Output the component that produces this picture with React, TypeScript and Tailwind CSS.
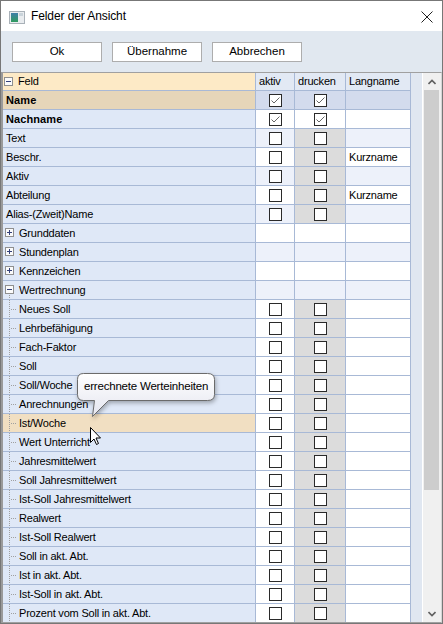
import React from 'react';

type Row = {
  label: string;
  kind: 'top' | 'group' | 'child';
  bold?: boolean;
  checks?: [boolean, boolean];
  lang?: string;
  open?: boolean;
};

const off: [boolean, boolean] = [false, false];

const rows: Row[] = [
  { label: 'Name', kind: 'top', bold: true, checks: [true, true] },
  { label: 'Nachname', kind: 'top', bold: true, checks: [true, true] },
  { label: 'Text', kind: 'top', checks: off },
  { label: 'Beschr.', kind: 'top', checks: off, lang: 'Kurzname' },
  { label: 'Aktiv', kind: 'top', checks: off },
  { label: 'Abteilung', kind: 'top', checks: off, lang: 'Kurzname' },
  { label: 'Alias-(Zweit)Name', kind: 'top', checks: off },
  { label: 'Grunddaten', kind: 'group' },
  { label: 'Stundenplan', kind: 'group' },
  { label: 'Kennzeichen', kind: 'group' },
  { label: 'Wertrechnung', kind: 'group', open: true },
  ...[
    'Neues Soll',
    'Lehrbefähigung',
    'Fach-Faktor',
    'Soll',
    'Soll/Woche',
    'Anrechnungen',
    'Ist/Woche',
    'Wert Unterricht',
    'Jahresmittelwert',
    'Soll Jahresmittelwert',
    'Ist-Soll Jahresmittelwert',
    'Realwert',
    'Ist-Soll Realwert',
    'Soll in akt. Abt.',
    'Ist in akt. Abt.',
    'Ist-Soll in akt. Abt.',
    'Prozent vom Soll in akt. Abt.',
  ].map((label): Row => ({ label, kind: 'child', checks: off })),
];

// plus / minus box of the tree, with optional line down to the children
const Expander = ({ open, x = 2, stem = false }: { open: boolean; x?: number; stem?: boolean }) => (
  <svg width="16" height="18" className="shrink-0">
    {stem && <line x1="6.5" y1="14" x2="6.5" y2="18" stroke="#a0a0a0" strokeDasharray="1 1" />}
    <rect x={x + 0.5} y="4.5" width="8" height="8" fill="#fbfbfb" stroke="#8f8f8f" />
    <line x1={x + 2} y1="8.5" x2={x + 7} y2="8.5" stroke="#33407a" />
    {!open && <line x1={x + 4.5} y1="6" x2={x + 4.5} y2="11" stroke="#33407a" />}
  </svg>
);

const TreeLine = () => (
  <svg width="16" height="18" className="shrink-0">
    <line x1="6.5" y1="0" x2="6.5" y2="18" stroke="#a0a0a0" strokeDasharray="1 1" />
    <line x1="8" y1="9.5" x2="13" y2="9.5" stroke="#a0a0a0" strokeDasharray="1 1" />
  </svg>
);

const CheckBox = ({ checked }: { checked: boolean }) => (
  <div className="w-[13px] h-[13px] border border-[#2a2a2a] bg-white flex items-center justify-center">
    {checked && (
      <svg width="11" height="11">
        <path d="M1.5 5.5 L4 8 L9.5 2.5" fill="none" stroke="#666666" strokeWidth="1" />
      </svg>
    )}
  </div>
);

const line = 'border-[#a8b9d6]';

function GridRow({ row, i }: { row: Row; i: number }) {
  const selected = i === 0;
  const hot = row.label === 'Ist/Woche';
  const feldBg = selected ? 'bg-[#e6d6b9]' : hot ? 'bg-[#f1dfc2]' : 'bg-[#dfe8f7]';
  const alt = row.kind !== 'child' && i % 2 === 0;
  const cellBg = selected ? 'bg-[#d3dbed]' : alt ? 'bg-[#edf1fa]' : 'bg-white';
  const druckBg = selected ? 'bg-[#d3dbed]' : row.checks && i > 1 ? 'bg-[#dcdcdc]' : cellBg;

  return (
    <div className="flex h-[19px] shrink-0">
      <div className={`w-[253px] flex items-center border-r border-b ${line} ${feldBg}`}>
        {row.kind === 'top' && (
          <span className={`pl-[3px] ${row.bold ? 'font-bold tracking-[0.1px]' : ''}`}>{row.label}</span>
        )}
        {row.kind === 'group' && (
          <>
            <Expander open={!!row.open} stem={row.open} />
            <span>{row.label}</span>
          </>
        )}
        {row.kind === 'child' && (
          <>
            <TreeLine />
            <span>{row.label}</span>
          </>
        )}
      </div>
      <div className={`w-[39px] flex items-center justify-center border-r border-b ${line} ${cellBg}`}>
        {row.checks && <CheckBox checked={row.checks[0]} />}
      </div>
      <div className={`w-[51px] flex items-center justify-center border-r border-b ${line} ${druckBg}`}>
        {row.checks && <CheckBox checked={row.checks[1]} />}
      </div>
      <div className={`w-[65px] flex items-center pl-[3px] border-r border-b ${line} ${cellBg}`}>
        {row.lang}
      </div>
    </div>
  );
}

const Button = ({ children }: { children: React.ReactNode }) => (
  <button className="w-[90px] h-[20px] bg-white border border-[#adadad] text-[11.5px] leading-none text-black">
    {children}
  </button>
);

export default function App() {
  return (
    <div className="relative w-[443px] h-[624px] border border-[#777777] bg-white flex flex-col overflow-hidden font-['Liberation_Sans',Arial,sans-serif] text-black">
      {/* title bar */}
      <div className="h-[30px] shrink-0 flex items-center bg-white pl-[8px] pr-[9px]">
        <svg width="16" height="13" className="mt-[2px]">
          <defs>
            <linearGradient id="ic" x1="0" y1="0" x2="0" y2="1">
              <stop offset="0" stopColor="#3f7ea8" />
              <stop offset="1" stopColor="#2f9b5e" />
            </linearGradient>
          </defs>
          <rect x="0.5" y="0.5" width="15" height="12" fill="#e9ecef" stroke="#a9b1b8" />
          <rect x="2" y="2" width="7" height="9" fill="url(#ic)" />
          <rect x="10" y="2" width="4" height="3" fill="#c9d3da" />
        </svg>
        <span className="ml-[6px] text-[12px] tracking-[-0.1px]">Felder der Ansicht</span>
        <svg width="12" height="12" className="ml-auto mt-[2px]">
          <path d="M0.5 0.5 L11.5 11.5 M11.5 0.5 L0.5 11.5" stroke="#222222" strokeWidth="1" />
        </svg>
      </div>

      {/* toolbar */}
      <div className="h-[41px] shrink-0 bg-[#e1e8f0] flex items-start gap-[10px] pl-[11px] pt-[11px]">
        <Button>Ok</Button>
        <Button>Übernahme</Button>
        <Button>Abbrechen</Button>
      </div>

      {/* grid */}
      <div className="flex-1 min-h-0 flex bg-[#e1e8f0] border-t border-l-2 border-r border-b border-t-[#a0a0a0] border-l-[#9a9a9a] border-r-[#d6d6d6] border-b-[#a0a0a0] text-[11px] tracking-[-0.2px]">
        <div className="w-[408px] flex flex-col overflow-hidden">
          <div className="flex h-[18px] shrink-0">
            <div className={`w-[253px] flex items-center border-r border-b ${line} bg-[#fdeac6]`}>
              <Expander open x={1} />
              <span className="-ml-[1px]">Feld</span>
            </div>
            <div className={`w-[39px] flex items-center pl-[3px] border-r border-b ${line} bg-[#e2e9f4]`}>aktiv</div>
            <div className={`w-[51px] flex items-center pl-[3px] border-r border-b ${line} bg-[#e2e9f4]`}>drucken</div>
            <div className={`w-[65px] flex items-center pl-[3px] border-r border-b ${line} bg-[#e2e9f4]`}>Langname</div>
          </div>
          {rows.map((row, i) => (
            <GridRow key={row.label} row={row} i={i} />
          ))}
        </div>
        <div className="w-[11px] bg-[#e0e7f1]" />
        <div className="w-[1px] bg-white" />
        {/* scrollbar */}
        <div className="w-[18px] bg-[#f0f0f0] flex flex-col">
          <div className="h-[17px] flex items-center justify-center">
            <svg width="8" height="6">
              <path d="M0.5 5 L4 1.5 L7.5 5" fill="none" stroke="#606060" strokeWidth="1.6" />
            </svg>
          </div>
          <div className="ml-[1px] w-[15px] h-[400px] bg-[#cdcdcd]" />
          <div className="flex-1" />
          <div className="h-[17px] flex items-center justify-center">
            <svg width="8" height="6">
              <path d="M0.5 1 L4 4.5 L7.5 1" fill="none" stroke="#606060" strokeWidth="1.6" />
            </svg>
          </div>
        </div>
      </div>

      {/* balloon tooltip */}
      <svg width="150" height="52" className="absolute left-[70px] top-[368px] drop-shadow-[1px_2px_2px_rgba(0,0,0,0.3)]">
        <defs>
          <linearGradient id="tip" x1="0" y1="0" x2="0" y2="1">
            <stop offset="0" stopColor="#ffffff" />
            <stop offset="1" stopColor="#e4e5ef" />
          </linearGradient>
        </defs>
        <path
          d="M12.5 4.5 H136.5 Q143.5 4.5 143.5 10.5 V25.5 Q143.5 31.5 136.5 31.5 H37.5 L21.5 47.5 L23.5 31.5 H12.5 Q6.5 31.5 6.5 25.5 V10.5 Q6.5 4.5 12.5 4.5 Z"
          fill="url(#tip)"
          stroke="#6b6b6b"
        />
      </svg>
      <div className="absolute left-[76px] top-[372px] w-[137px] h-[27px] flex items-center pl-[7px] text-[11.5px] tracking-[-0.2px]">
        errechnete Werteinheiten
      </div>

      {/* mouse cursor */}
      <svg width="14" height="22" className="absolute left-[89px] top-[426px]">
        <path
          d="M0.5 0.5 L0.5 15.5 L4 12 L6.5 17.5 L8.5 16.5 L6 11 L10.5 11 Z"
          fill="#ffffff"
          stroke="#000000"
          strokeLinejoin="round"
        />
      </svg>
    </div>
  );
}
